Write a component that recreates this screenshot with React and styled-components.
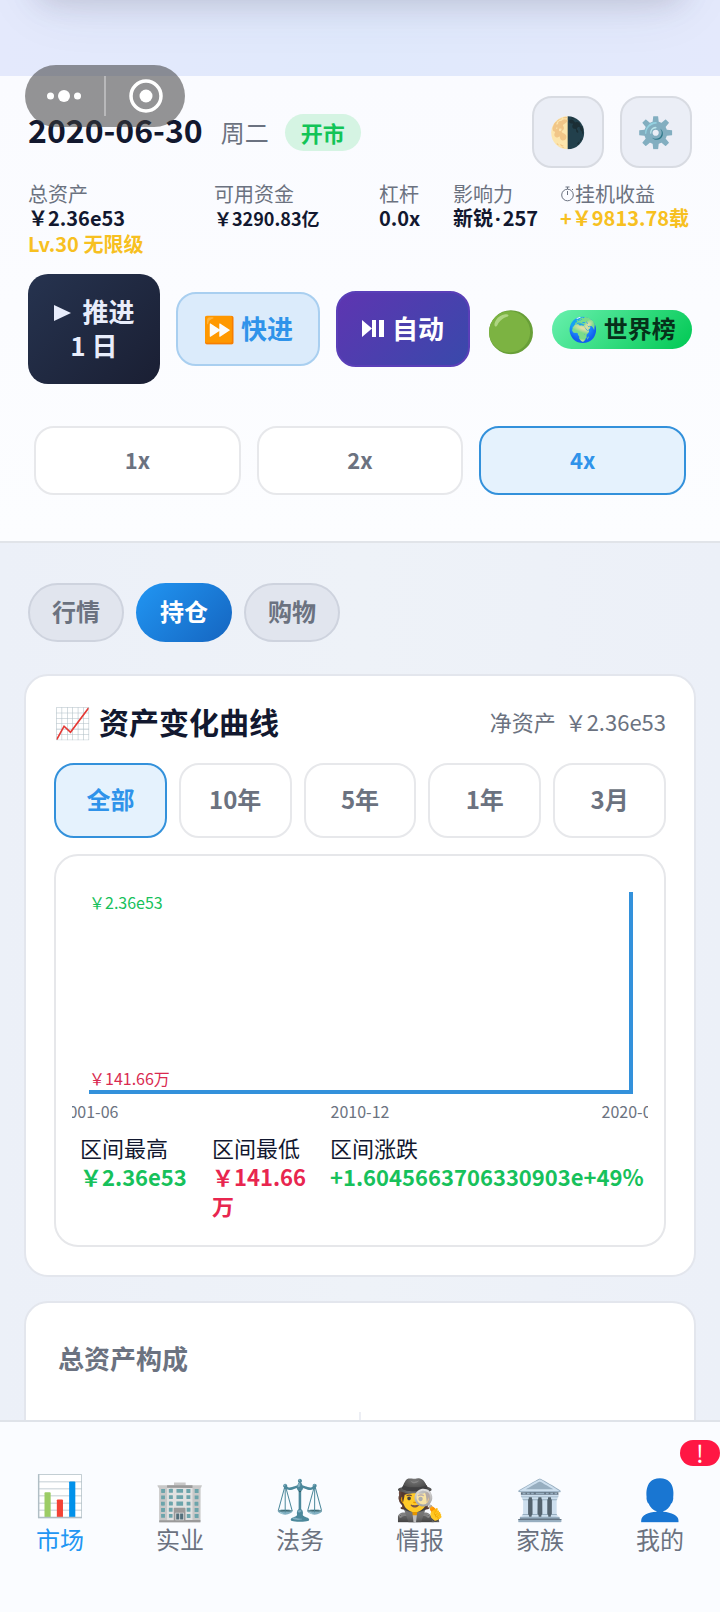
import React, { useState } from "react";
import styled, { createGlobalStyle, css } from "styled-components";

const Global = createGlobalStyle`
  * { box-sizing: border-box; }
  body { margin: 0; background: #edf1f8; }
  button, a { font: inherit; color: inherit; text-decoration: none; }
  button { margin: 0; padding: 0; border: 0; background: none; cursor: pointer; }
  h2, h3, p, dl, dt, dd { margin: 0; font: inherit; }
`;

const Page = styled.div`
  position: relative;
  display: flex;
  flex-direction: column;
  height: 100vh;
  overflow: hidden;
  color: #12182f;
  background: linear-gradient(90deg, #ecf0f8, #eef2f8 50%, #ecf0f8);
  font-family: "Noto Sans CJK SC", "Noto Sans", sans-serif;
  font-size: 20px;
  line-height: 24px;
`;

const StatusBand = styled.div`
  position: relative;
  flex: none;
  height: 76px;
  overflow: hidden;
  background: linear-gradient(90deg, #e4e9fc, #e0e9fc 50%, #e4e9fc);
  &::before {
    content: "";
    position: absolute;
    top: -100px;
    left: 40px;
    right: 40px;
    height: 100px;
    box-shadow: 0 0 28px rgba(60, 50, 80, 0.18), 0 0 60px rgba(60, 70, 90, 0.12);
  }
`;

const Capsule = styled.div`
  position: absolute;
  z-index: 2;
  top: 65px;
  left: 25px;
  display: flex;
  width: 160px;
  height: 62px;
  border-radius: 31px;
  background: rgba(60, 60, 60, 0.54);
`;

const Header = styled.header`
  flex: none;
  padding: 20px 28px 46px;
  border-bottom: 2px solid #e1e4e9;
  background: linear-gradient(#fafbff, #fcfdff);
`;

const Row = styled.div`
  display: flex;
  align-items: center;
  gap: 16px;
`;

const DateText = styled.time`
  padding: 0 2px 6px 0;
  font-size: 32px;
  font-weight: 700;
`;

const Weekday = styled.span`
  color: #6b7280;
  font-size: 24px;
`;

const OpenBadge = styled.span`
  margin-right: auto;
  padding: 0 16px;
  border-radius: 20px;
  color: #12c457;
  background: #d5f4e3;
  font-size: 22px;
  font-weight: 700;
  line-height: 37px;
`;

const IconButton = styled.button`
  width: 72px;
  height: 72px;
  border-radius: 20px;
  font-size: 30px;
  line-height: 40px;
  && {
    padding: 0 2px 4px 0;
    border: 2px solid #d8dbe2;
    background: #ebeef6;
  }
`;

const Stats = styled.dl`
  display: grid;
  grid-template-columns: 186fr 165fr 74fr 107fr 132fr;
  margin-top: 14px;
  white-space: nowrap;
`;

const StatLabel = styled.dt`
  display: flex;
  align-items: center;
  color: #6b7280;
`;

const StatValue = styled.dd`
  color: ${(p) => (p.$gold ? "#f7c021" : "#12182f")};
  font-size: ${(p) => (p.$small ? 18 : 20)}px;
  font-weight: 700;
`;

const Dot = styled.span`
  padding: 0 2px;
  font-family: "Noto Sans", sans-serif;
`;

const Level = styled(StatValue)`
  margin-top: 2px;
`;

const Actions = styled(Row)`
  margin-top: 18px;
`;

const actionTones = {
  dark: css`
    color: #e8edfb;
    background: linear-gradient(135deg, #26334f, #1a1f33);
    padding: 20px 22px 22px;
  `,
  light: css`
    color: #2f93ea;
    background: #dbebfb;
    border: 2px solid #a9cff0;
    padding: 17px 22px 19px;
  `,
  violet: css`
    color: #fff;
    background: linear-gradient(135deg, #5e35b1, #3949ab);
    border: 2px solid #5a3fb8;
    padding: 18px 22px 20px;
  `,
};

const ActionButton = styled.button`
  display: flex;
  align-items: center;
  justify-content: center;
  flex: 1 1 ${(p) => p.$basis}px;
  gap: 8px;
  border-radius: 20px;
  font-size: 26px;
  font-weight: 700;
  line-height: 34px;
  white-space: nowrap;
  && { ${(p) => actionTones[p.$tone]} }
`;

const Status = styled.span`
  display: flex;
  justify-content: center;
  flex: none;
  width: 50px;
  font-size: 40px;
  line-height: 50px;
`;

const RankButton = styled.button`
  flex: none;
  width: 140px;
  height: 39px;
  border-radius: 20px;
  color: #06301a;
  font-size: 24px;
  font-weight: 600;
  line-height: 36px;
  && {
    padding-bottom: 2px;
    background: linear-gradient(135deg, #69f0ae, #00c853);
  }
`;

const Choices = styled.div`
  display: flex;
  gap: ${(p) => p.$gap}px;
  margin: ${(p) => p.$margin};
`;

const Choice = styled.button`
  flex: 1 1 0;
  height: ${(p) => p.$height}px;
  border-radius: 20px;
  font-size: ${(p) => p.$size}px;
  font-weight: 700;
  && {
    padding-bottom: 4px;
    color: ${(p) => (p["aria-pressed"] ? "#2f93ea" : "#6b7280")};
    background: ${(p) => (p["aria-pressed"] ? "#e5f2fd" : "#fff")};
    border: 2px solid ${(p) => (p["aria-pressed"] ? "#3391db" : "#e7e8eb")};
  }
`;

const Main = styled.main`
  flex: 1 1 0;
  min-height: 0;
  overflow-y: auto;
  scrollbar-width: none;
  padding: 40px 24px 24px;
`;

const Tabs = styled.div`
  display: flex;
  gap: 12px;
  padding: 0 4px;
`;

const Tab = styled.button`
  width: 96px;
  height: 59px;
  border-radius: 30px;
  font-size: 24px;
  font-weight: 700;
  && {
    padding-bottom: 4px;
    color: ${(p) => (p["aria-selected"] ? "#fff" : "#6b7280")};
    background: ${(p) => (p["aria-selected"] ? "linear-gradient(135deg, #2196f3, #1565c0)" : "#e1e5ee")};
    border: ${(p) => (p["aria-selected"] ? "0" : "2px solid #ced3de")};
  }
`;

const Card = styled.section`
  margin-top: ${(p) => p.$top}px;
  padding: 28px;
  border: 2px solid #e3e6ed;
  border-radius: 24px;
  background: #fff;
`;

const CardHead = styled.div`
  display: flex;
  align-items: center;
  gap: 8px;
  height: 40px;
  padding-bottom: 6px;
`;

const TitleIcon = styled.span`
  font-size: 30px;
`;

const CardTitle = styled.h2`
  margin-right: auto;
  font-size: 30px;
  font-weight: 700;
  line-height: 40px;
`;

const NetWorth = styled.p`
  display: flex;
  gap: 9px;
  color: #6b7280;
  font-size: 22px;
`;

const ChartBox = styled.div`
  padding: 16px;
  border: 2px solid #e6e7ea;
  border-radius: 24px;
`;

const Chart = styled.svg`
  display: block;
  width: 100%;
  overflow: hidden;
  font-size: 16px;
`;

const Summary = styled.dl`
  display: grid;
  grid-template-columns: 110px 96px 1fr;
  gap: 22px;
  padding: 7px 8px 9px;
  font-size: 22px;
  line-height: 29px;
`;

const SummaryValue = styled.dd`
  color: ${(p) => (p.$down ? "#e8264f" : "#17c15b")};
  font-weight: 700;
`;

const MixTitle = styled.h3`
  padding: 7px 4px 9px;
  color: #6b7280;
  font-size: 26px;
  font-weight: 700;
  line-height: 40px;
`;

const MixDivider = styled.div`
  width: 2px;
  height: 120px;
  margin: 25px auto 0;
  background: #eceef4;
`;

const Nav = styled.nav`
  flex: none;
  display: grid;
  grid-template-columns: repeat(6, 1fr);
  padding: 49px 0 57px;
  border-top: 2px solid #dfe3e9;
  background: #fafcff;
`;

const NavItem = styled.a`
  position: relative;
  display: flex;
  flex-direction: column;
  align-items: center;
  font-size: 24px;
  line-height: 32px;
  && { color: ${(p) => (p["aria-current"] ? "#2196f3" : "#6b7280")}; }
`;

const NavIcon = styled.span`
  padding-bottom: ${(p) => (p.$active ? 8 : 0)}px;
  font-size: 40px;
  line-height: ${(p) => (p.$active ? 44 : 52)}px;
`;

const NavBadge = styled.span`
  position: absolute;
  top: -31px;
  right: 0;
  width: 40px;
  border-radius: 13px;
  color: #fff;
  background: #ff1744;
  text-align: center;
  font-size: 24px;
  line-height: 26px;
`;

const NAV = [
  ["📊", "市场"],
  ["🏢", "实业"],
  ["⚖️", "法务"],
  ["🕵️", "情报"],
  ["🏛️", "家族"],
  ["👤", "我的"],
];

export default function App() {
  const [speed, setSpeed] = useState("4x");
  const [tab, setTab] = useState("持仓");
  const [range, setRange] = useState("全部");
  return (
    <Page>
      <Global />
      <StatusBand />
      <Capsule>
        <svg width="160" height="62" fill="#fff" aria-hidden="true">
          <circle cx="25.500" cy="31" r="3.500" />
          <circle cx="39" cy="31" r="6" />
          <circle cx="52.500" cy="31" r="3.500" />
          <rect x="79" y="11" width="2" height="40" opacity="0.35" />
          <circle cx="121" cy="31" r="15" fill="none" stroke="#fff" strokeWidth="3.500" />
          <circle cx="121" cy="31" r="6.500" />
        </svg>
      </Capsule>
      <Header>
        <Row>
          <DateText>2020-06-30</DateText>
          <Weekday>周二</Weekday>
          <OpenBadge>开市</OpenBadge>
          <IconButton aria-label="主题">🌗</IconButton>
          <IconButton aria-label="设置">⚙️</IconButton>
        </Row>
        <Stats>
          <div>
            <StatLabel>总资产</StatLabel>
            <StatValue>￥2.36e53</StatValue>
            <Level $gold>Lv.30 无限级</Level>
          </div>
          <div>
            <StatLabel>可用资金</StatLabel>
            <StatValue $small>￥3290.83亿</StatValue>
          </div>
          <div>
            <StatLabel>杠杆</StatLabel>
            <StatValue>0.0x</StatValue>
          </div>
          <div>
            <StatLabel>影响力</StatLabel>
            <StatValue>
              新锐<Dot>·</Dot>257
            </StatValue>
          </div>
          <div>
            <StatLabel>
              <svg width="15" height="18" viewBox="0 0 15 18" fill="none" stroke="#6b7280" aria-hidden="true">
                <circle cx="7.500" cy="10" r="5.800" />
                <path d="M7.500 6v4M5.500 2h4M7.500 2v2M12 4l1 1" />
              </svg>
              挂机收益
            </StatLabel>
            <StatValue $gold>+￥9813.78载</StatValue>
          </div>
        </Stats>
        <Actions>
          <ActionButton $tone="dark" $basis={132}>
            <span>
              <svg width="29" height="18" viewBox="0 0 29 18" fill="currentColor" aria-hidden="true">
                <path d="M1 1l17 8-17 8z" />
              </svg>
              推进
              <br />1 日
            </span>
          </ActionButton>
          <ActionButton $tone="light" $basis={144}>
            <span>⏩ 快进</span>
          </ActionButton>
          <ActionButton $tone="violet" $basis={134}>
            <svg width="22" height="17" viewBox="0 0 22 17" fill="currentColor" aria-hidden="true">
              <path d="M0 0l10 8.500L0 17zM10 0h4v17h-4zM17 0h5v17h-5z" />
            </svg>
            自动
          </ActionButton>
          <Status>🟢</Status>
          <RankButton>🌍 世界榜</RankButton>
        </Actions>
        <Choices $gap={16} $margin="42px 6px 0">
          {["1x", "2x", "4x"].map((s) => (
            <Choice key={s} $height={69} $size={22} aria-pressed={s === speed} onClick={() => setSpeed(s)}>
              {s}
            </Choice>
          ))}
        </Choices>
      </Header>
      <Main>
        <Tabs role="tablist">
          {["行情", "持仓", "购物"].map((t) => (
            <Tab key={t} role="tab" aria-selected={t === tab} onClick={() => setTab(t)}>
              {t}
            </Tab>
          ))}
        </Tabs>
        <Card $top={32}>
          <CardHead>
            <TitleIcon>📈</TitleIcon>
            <CardTitle>资产变化曲线</CardTitle>
            <NetWorth>
              <span>净资产</span>
              <span>￥2.36e53</span>
            </NetWorth>
          </CardHead>
          <Choices $gap={12} $margin="19px 0 16px">
            {["全部", "10年", "5年", "1年", "3月"].map((r) => (
              <Choice key={r} $height={75} $size={24} aria-pressed={r === range} onClick={() => setRange(r)}>
                {r}
              </Choice>
            ))}
          </Choices>
          <ChartBox>
            <Chart viewBox="0 0 576 254">
              <path d="M17 220H559V20" fill="none" stroke="#3391db" strokeWidth="4" />
              <text x="17" y="37" fill="#17c15b">￥2.36e53</text>
              <text x="17" y="213" fill="#d92a50">￥141.66万</text>
              <g fill="#6b7280" textAnchor="middle">
                <text x="17" y="246">2001-06</text>
                <text x="288" y="246">2010-12</text>
                <text x="559" y="246">2020-06</text>
              </g>
            </Chart>
            <Summary>
              <div>
                <dt>区间最高</dt>
                <SummaryValue>￥2.36e53</SummaryValue>
              </div>
              <div>
                <dt>区间最低</dt>
                <SummaryValue $down>￥141.66万</SummaryValue>
              </div>
              <div>
                <dt>区间涨跌</dt>
                <SummaryValue>+1.6045663706330903e+49%</SummaryValue>
              </div>
            </Summary>
          </ChartBox>
        </Card>
        <Card $top={24}>
          <MixTitle>总资产构成</MixTitle>
          <MixDivider />
        </Card>
      </Main>
      <Nav>
        {NAV.map(([icon, label], i) => (
          <NavItem key={label} href="#" aria-current={i === 0 ? "page" : undefined}>
            <NavIcon $active={i === 0}>{icon}</NavIcon>
            {label}
            {i === 5 && <NavBadge>!</NavBadge>}
          </NavItem>
        ))}
      </Nav>
    </Page>
  );
}
